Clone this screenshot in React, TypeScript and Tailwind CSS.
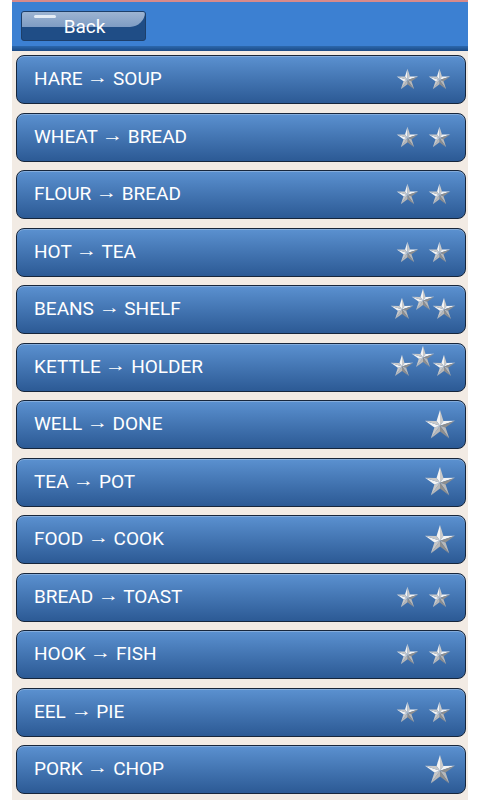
import React from 'react';

type Level = { from: string; to: string; stars: 1 | 2 | 3 };

const levels: Level[] = [
  { from: 'HARE', to: 'SOUP', stars: 2 },
  { from: 'WHEAT', to: 'BREAD', stars: 2 },
  { from: 'FLOUR', to: 'BREAD', stars: 2 },
  { from: 'HOT', to: 'TEA', stars: 2 },
  { from: 'BEANS', to: 'SHELF', stars: 3 },
  { from: 'KETTLE', to: 'HOLDER', stars: 3 },
  { from: 'WELL', to: 'DONE', stars: 1 },
  { from: 'TEA', to: 'POT', stars: 1 },
  { from: 'FOOD', to: 'COOK', stars: 1 },
  { from: 'BREAD', to: 'TOAST', stars: 2 },
  { from: 'HOOK', to: 'FISH', stars: 2 },
  { from: 'EEL', to: 'PIE', stars: 2 },
  { from: 'PORK', to: 'CHOP', stars: 1 },
];

function pt(angle: number, r: number) {
  const a = (angle * Math.PI) / 180;
  return `${(12 + r * Math.cos(a)).toFixed(2)},${(12.5 + r * Math.sin(a)).toFixed(2)}`;
}

function Star({ size }: { size: number }) {
  const facets: React.ReactNode[] = [];
  for (let k = 0; k < 5; k++) {
    const o = -90 + 72 * k;
    const left = `12,12.5 ${pt(o - 36, 4.4)} ${pt(o, 11.8)}`;
    const right = `12,12.5 ${pt(o, 11.8)} ${pt(o + 36, 4.4)}`;
    facets.push(<polygon key={`l${k}`} points={left} fill={k === 2 || k === 3 ? '#b8b8b8' : '#f4f4f4'} />);
    facets.push(<polygon key={`r${k}`} points={right} fill={k === 1 || k === 2 ? '#8e8e8e' : '#c9c9c9'} />);
  }
  return (
    <svg width={size} height={size} viewBox="0 0 24 24" className="block">
      {facets}
    </svg>
  );
}

function Stars({ count }: { count: 1 | 2 | 3 }) {
  if (count === 1) {
    return (
      <div className="mr-[9px]">
        <Star size={32} />
      </div>
    );
  }
  if (count === 3) {
    return (
      <div className="flex items-end mr-[9px] mb-[2px]">
        <Star size={24} />
        <div className="-ml-[3px] -translate-y-[9px]">
          <Star size={24} />
        </div>
        <div className="-ml-[3px]">
          <Star size={24} />
        </div>
      </div>
    );
  }
  return (
    <div className="flex items-center gap-[9px] mr-[14px]">
      <Star size={23} />
      <Star size={23} />
    </div>
  );
}

export default function App() {
  return (
    <div className="w-[480px] h-[800px] bg-white overflow-hidden" style={{ fontFamily: 'Roboto, "Liberation Sans", sans-serif' }}>
      <div className="mx-[12px] h-full bg-[#f2ebe4]">
        <div className="h-[2px] bg-[#d88a8a]" />
        <div className="h-[44px] bg-[#3c80d2] flex items-start pt-[9px] pl-[9px]">
          <button className="relative w-[125px] h-[30px] rounded-[3px] border border-[#1d3f6a] overflow-hidden bg-[#1f4d86]">
            <div className="absolute inset-x-0 top-0 h-[15px] bg-gradient-to-b from-[#9db4d2] to-[#7e9cc3] rounded-br-[60px]" />
            <div className="absolute left-[12px] top-[3px] w-[22px] h-[3px] bg-[#e4ecf5] rounded-full" />
            <span className="relative text-white text-[19px] leading-[29px] pl-[2px]">Back</span>
          </button>
        </div>
        <div className="h-[5px] bg-gradient-to-b from-[#2c68ad] to-[#1b4a85]" />
        <div className="flex flex-col gap-[8.5px] pt-[4px] pl-[4px] pr-[2px]">
          {levels.map((l, i) => (
            <div
              key={i}
              className="h-[49px] rounded-[8px] border-[1.5px] border-[#17263b] bg-gradient-to-b from-[#5b91d0] to-[#2c5a95] flex items-center justify-between pl-[17px] shadow-[inset_0_1px_0_rgba(255,255,255,0.25)]"
            >
              <span className="text-white text-[19px]">
                {l.from} <span className="inline-block text-[17px] scale-x-125 mx-[2px] -translate-y-[2px]">→</span> {l.to}
              </span>
              <Stars count={l.stars} />
            </div>
          ))}
        </div>
      </div>
    </div>
  );
}
